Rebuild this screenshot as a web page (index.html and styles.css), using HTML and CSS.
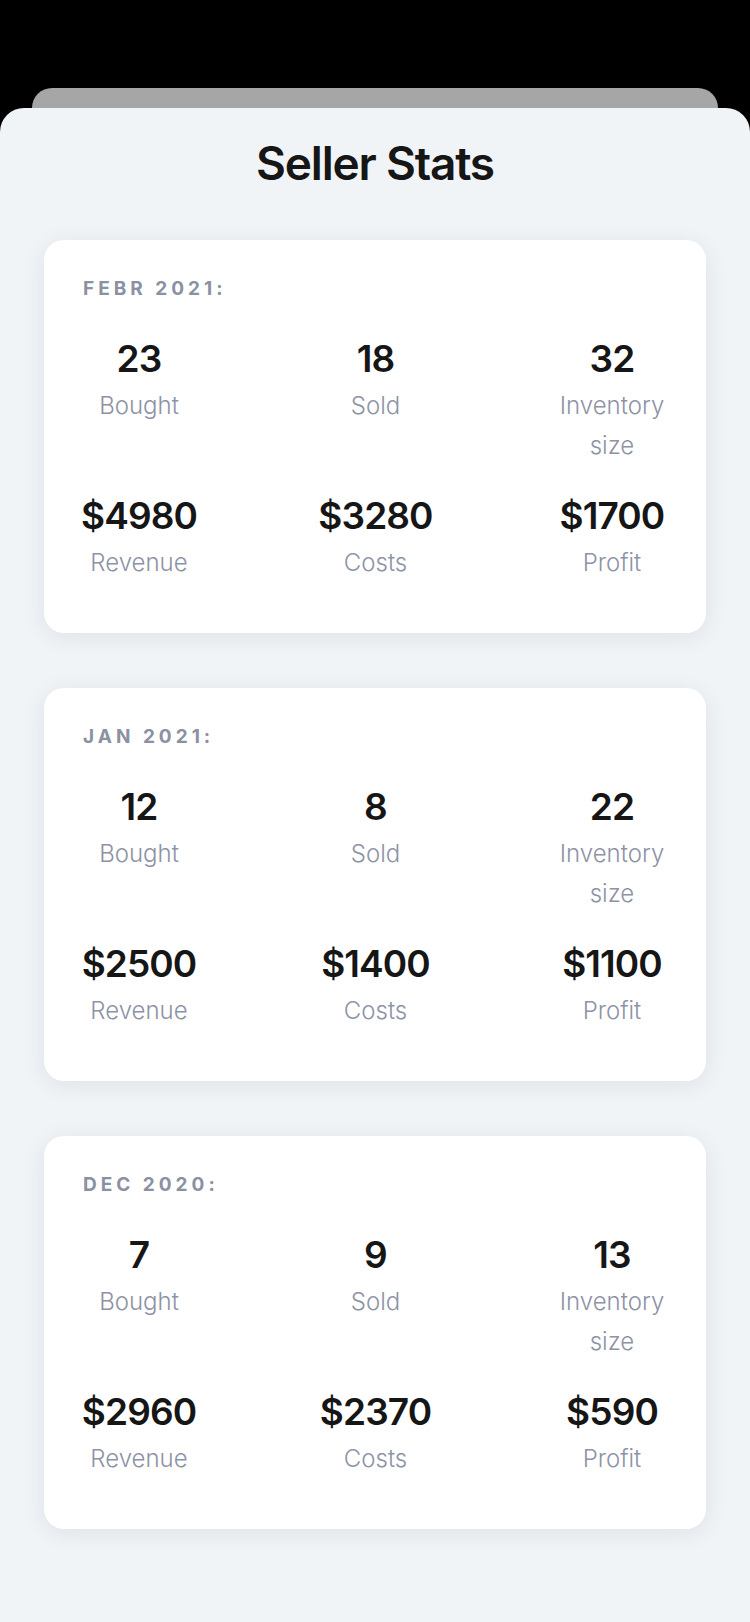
FILE: index.html
```html
<!DOCTYPE html>
<html lang="en">
<head>
<meta charset="utf-8">
<title>Seller Stats</title>
<link rel="stylesheet" href="styles.css">
</head>
<body>
<div class="screen">
  <div class="back-sheet"></div>
  <div class="sheet">
    <header class="sheet-header">
      <h1 class="title">Seller Stats</h1>
    </header>
    <main class="cards">
      <section class="card">
        <div class="month">FEBR 2021:</div>
        <div class="grid">
          <div class="stat"><div class="num">23</div><div class="lbl">Bought</div></div>
          <div class="stat"><div class="num">18</div><div class="lbl">Sold</div></div>
          <div class="stat"><div class="num">32</div><div class="lbl">Inventory size</div></div>
        </div>
        <div class="grid row2">
          <div class="stat"><div class="num">$4980</div><div class="lbl">Revenue</div></div>
          <div class="stat"><div class="num">$3280</div><div class="lbl">Costs</div></div>
          <div class="stat"><div class="num">$1700</div><div class="lbl">Profit</div></div>
        </div>
      </section>
      <section class="card">
        <div class="month">JAN 2021:</div>
        <div class="grid">
          <div class="stat"><div class="num">12</div><div class="lbl">Bought</div></div>
          <div class="stat"><div class="num">8</div><div class="lbl">Sold</div></div>
          <div class="stat"><div class="num">22</div><div class="lbl">Inventory size</div></div>
        </div>
        <div class="grid row2">
          <div class="stat"><div class="num">$2500</div><div class="lbl">Revenue</div></div>
          <div class="stat"><div class="num">$1400</div><div class="lbl">Costs</div></div>
          <div class="stat"><div class="num">$1100</div><div class="lbl">Profit</div></div>
        </div>
      </section>
      <section class="card">
        <div class="month">DEC 2020:</div>
        <div class="grid">
          <div class="stat"><div class="num">7</div><div class="lbl">Bought</div></div>
          <div class="stat"><div class="num">9</div><div class="lbl">Sold</div></div>
          <div class="stat"><div class="num">13</div><div class="lbl">Inventory size</div></div>
        </div>
        <div class="grid row2">
          <div class="stat"><div class="num">$2960</div><div class="lbl">Revenue</div></div>
          <div class="stat"><div class="num">$2370</div><div class="lbl">Costs</div></div>
          <div class="stat"><div class="num">$590</div><div class="lbl">Profit</div></div>
        </div>
      </section>
    </main>
  </div>
</div>
</body>
</html>
```

FILE: styles.css
```css
* { box-sizing: border-box; }
html, body {
  margin: 0;
  padding: 0;
  background: #000;
}
body {
  width: 750px;
  height: 1622px;
  overflow: hidden;
  font-family: "Inter", "Liberation Sans", sans-serif;
}
.screen {
  padding-top: 88px;
  height: 1622px;
}
.back-sheet {
  margin: 0 32px;
  height: 40px;
  background: #a6a6a6;
  border-radius: 20px 20px 0 0;
}
.sheet {
  margin-top: -20px;
  background: #f0f4f7;
  border-radius: 24px 24px 0 0;
  height: 1514px;
}
.sheet-header {
  height: 110px;
  display: flex;
  justify-content: center;
  padding-top: 27px;
}
.title {
  margin: 0;
  font-size: 46px;
  line-height: 56px;
  font-weight: 600;
  letter-spacing: -1.2px;
  color: #161616;
}
.cards {
  display: flex;
  flex-direction: column;
  gap: 55px;
  padding: 22px 44px 0;
}
.card {
  background: #fff;
  border-radius: 20px;
  height: 393px;
  box-shadow: 0 4px 24px rgba(20, 30, 50, 0.08);
  padding: 37px 0 0;
}
.month {
  padding-left: 39px;
  font-size: 19px;
  line-height: 24px;
  font-weight: 700;
  letter-spacing: 4px;
  color: #8b90a3;
}
.grid {
  display: grid;
  grid-template-columns: 130px 130px 130px;
  justify-content: space-between;
  padding: 0 29px 0 30px;
  margin-top: 34px;
}
.grid.row2 {
  margin-top: 26px;
}
.stat {
  text-align: center;
}
.num {
  font-size: 37px;
  line-height: 48px;
  font-weight: 600;
  letter-spacing: -0.9px;
  color: #161616;
}
.lbl {
  margin-top: 3px;
  font-size: 24px;
  line-height: 40px;
  font-weight: 300;
  color: #8d92a5;
  padding: 0 8px;
}
```
